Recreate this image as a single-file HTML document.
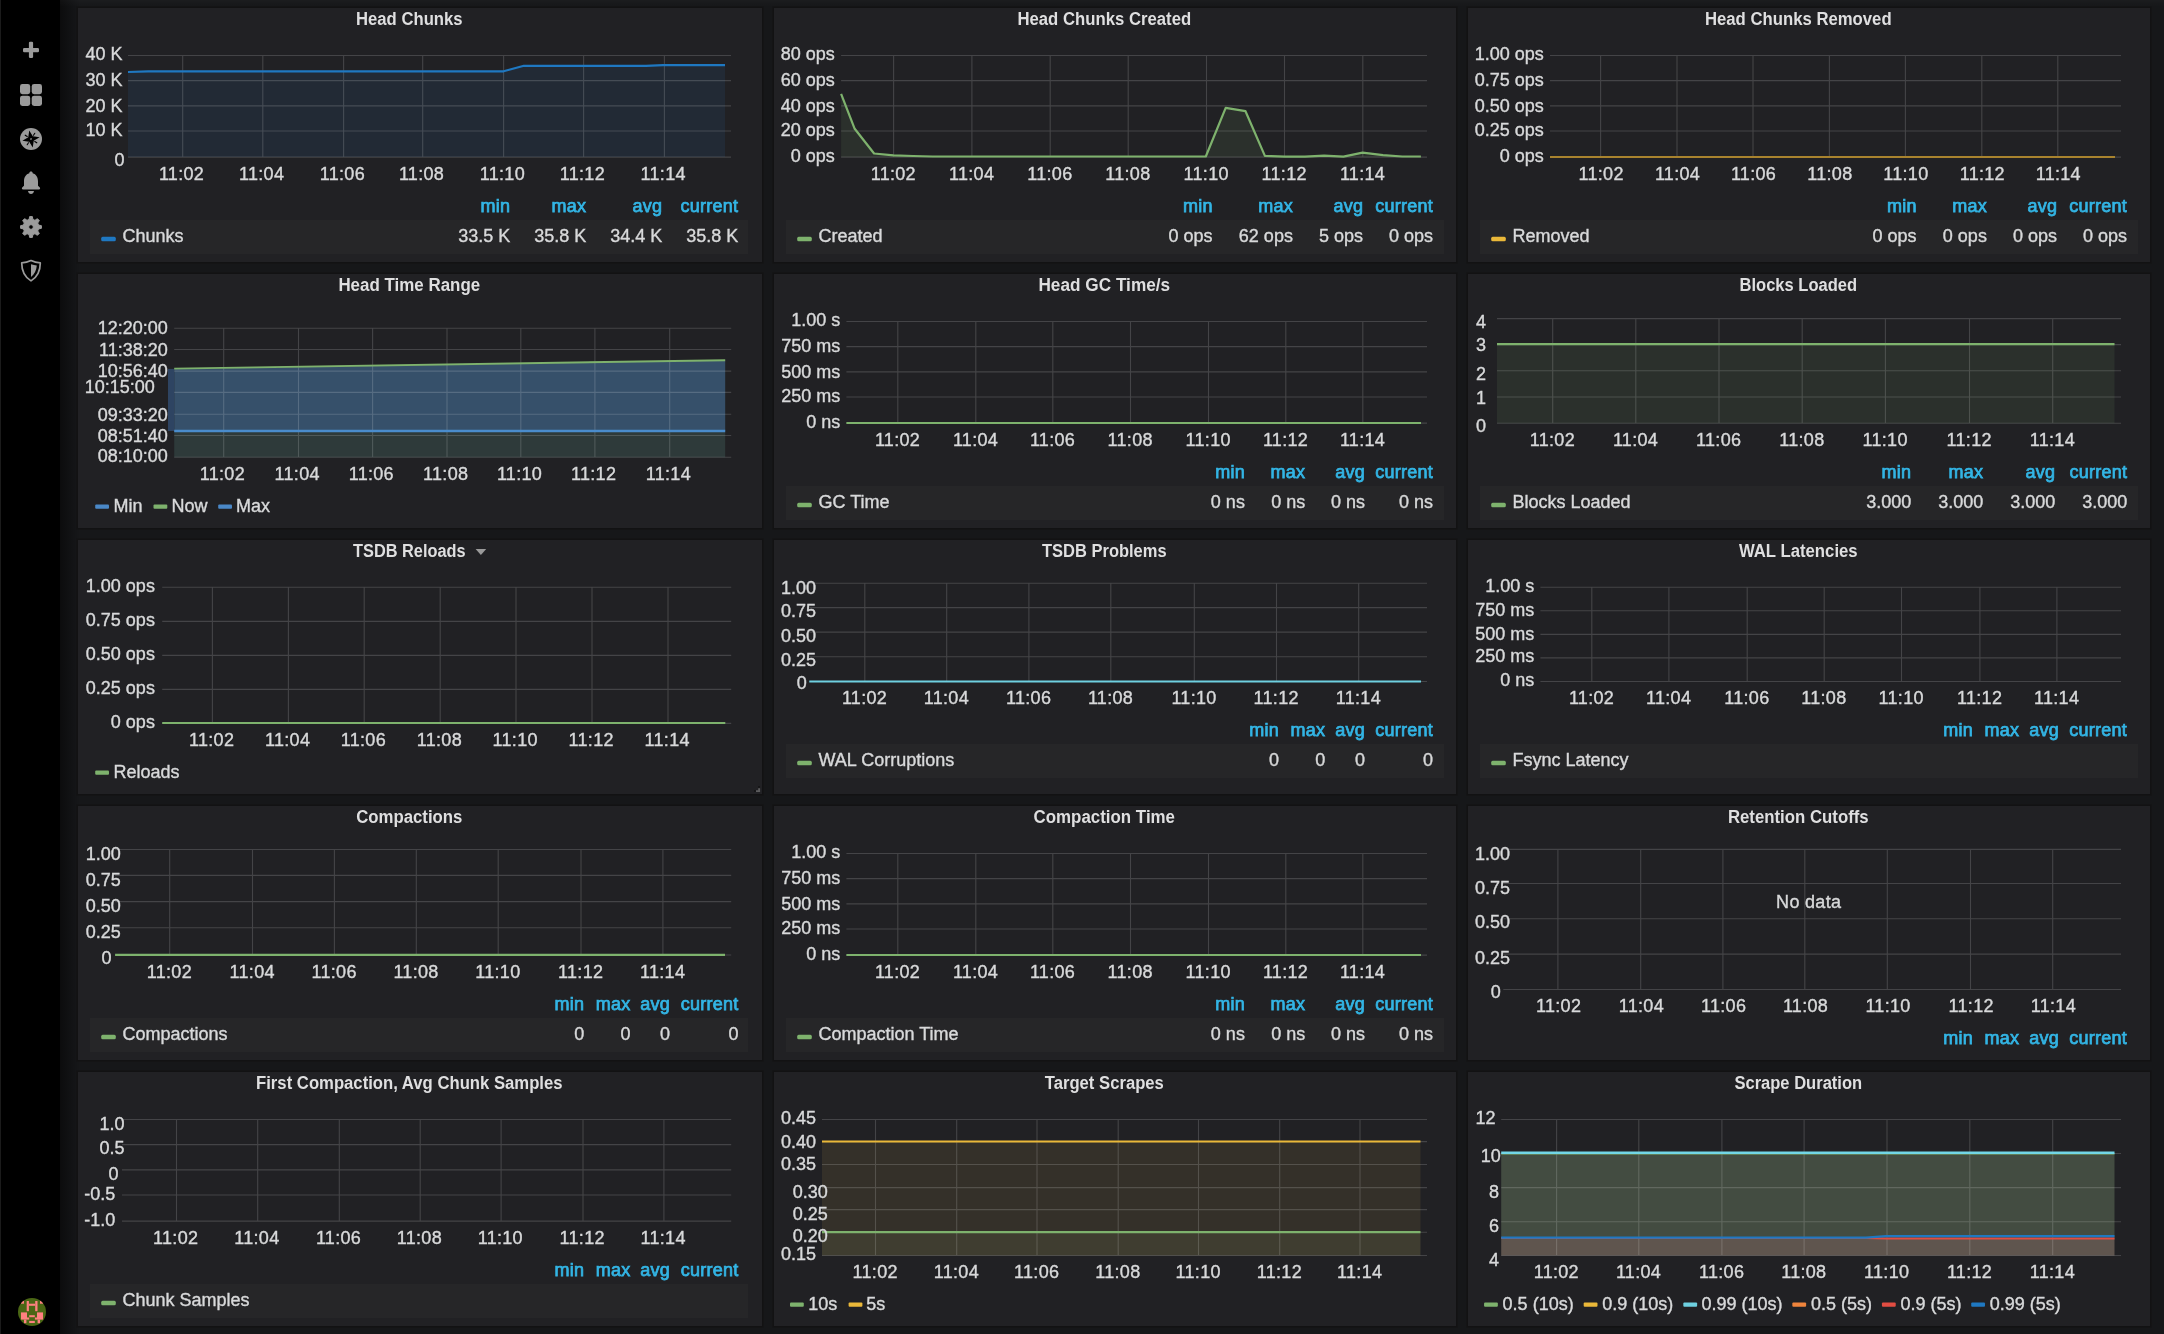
<!DOCTYPE html>
<html lang="en"><head><meta charset="utf-8"><title>Prometheus 2.0 Stats - Grafana</title>
<style>
html,body{margin:0;padding:0}
body{width:2164px;height:1334px;overflow:hidden;background:#161719;position:relative;
 font-family:"Liberation Sans",sans-serif;font-size:18px;color:#d8d9da}
.sidemenu{position:absolute;left:0;top:0;width:60px;height:1334px;background:#000;box-shadow:inset 1px 0 0 #1b1b1b}
.sidemenu svg{position:absolute;left:0;top:0}
.shade{position:absolute;left:60px;top:0;width:20px;height:1334px;background:linear-gradient(90deg,#0c0c0d 0,#131416 70%,#161719 100%)}
.topshade{position:absolute;left:60px;top:0;width:2104px;height:7px;background:linear-gradient(180deg,rgba(255,255,255,.024) 0,rgba(255,255,255,.01) 45%,rgba(255,255,255,0) 100%)}
.panel{position:absolute;background:#212124;box-shadow:0 0 0 1.5px #121213;margin:0}
.psvg{position:absolute;left:0;top:0;overflow:visible;will-change:transform}
.grid{stroke:#ffffff;stroke-opacity:.16;stroke-width:1.1;fill:none}
text{font-family:"Liberation Sans",sans-serif;font-size:18px;fill:#d8d9da;stroke:#d8d9da;stroke-width:.38px}
.yl{text-anchor:end}
.xl{text-anchor:middle;letter-spacing:.3px}
.title{text-anchor:middle;font-weight:bold;fill:#dfdfe0;stroke:none}
.lh{text-anchor:end;letter-spacing:.25px;fill:#33b5e5;stroke:#33b5e5;stroke-width:.75px}
.lv{text-anchor:end}
</style></head><body>
<nav class="sidemenu">
<svg width="60" height="1334" viewBox="0 0 60 1334">
<g fill="#9b9b9b"><rect x="23" y="48" width="16" height="4.2" rx="1.2"/><rect x="28.9" y="41.8" width="4.2" height="16.2" rx="1.2"/></g>
<g fill="#9b9b9b"><rect x="20" y="84" width="10.2" height="10.2" rx="2.4"/><rect x="31.7" y="84" width="10.3" height="10.2" rx="2.4"/><rect x="20" y="95.7" width="10.2" height="10.3" rx="2.4"/><rect x="31.7" y="95.7" width="10.3" height="10.3" rx="2.4"/></g>
<g transform="translate(31 139)"><circle r="11" fill="#9b9b9b"/><g transform="rotate(-11.6)"><path d="M0 -8.8L2.3 -2.3L8.8 0L2.3 2.3L0 8.8L-2.3 2.3L-8.8 0L-2.3 -2.3Z" fill="#000"/><path d="M3.2 -3.2L4.9 -4.9M3.2 3.2L4.9 4.9M-3.2 3.2L-4.9 4.9M-3.2 -3.2L-4.9 -4.9" stroke="#000" stroke-width="1.1" stroke-linecap="round"/><rect x="-0.8" y="-0.8" width="1.6" height="1.6" fill="#8a8a8a"/></g></g>
<g fill="#9b9b9b"><path d="M31 171.6c1 0 1.7 0.7 1.7 1.6c3.4 1 5.3 4 5.3 8.2v4.4l1.8 1.7c0.6 0.6 0.3 1.9 -0.8 1.9h-16c-1.1 0 -1.4 -1.3 -0.8 -1.9l1.8 -1.7v-4.4c0 -4.2 1.9 -7.2 5.3 -8.2c0 -0.9 0.7 -1.6 1.7 -1.6z"/><path d="M28 191h6c-0.3 1.8 -1.5 3 -3 3s-2.700 -1.2 -3 -3z"/></g>
<path d="M29.07 219.44L29.64 216.59L32.36 216.59L32.93 219.44L34.98 220.29L37.4 218.68L39.32 220.6L37.71 223.02L38.56 225.07L41.41 225.64L41.41 228.36L38.56 228.93L37.71 230.98L39.32 233.4L37.4 235.32L34.98 233.71L32.93 234.56L32.36 237.41L29.64 237.41L29.07 234.56L27.02 233.71L24.6 235.32L22.68 233.4L24.29 230.98L23.44 228.93L20.59 228.36L20.59 225.64L23.44 225.07L24.29 223.02L22.68 220.6L24.6 218.68L27.02 220.29ZM31 224.7a2.3 2.3 0 1 0 0.01 0z" fill="#9b9b9b" fill-rule="evenodd" stroke="#9b9b9b" stroke-width="1" stroke-linejoin="round"/>
<path d="M31 260.6c3 1.5 6 2.200 9.300 2.300c0 8.500 -3.300 14.200 -9.300 18c-6 -3.800 -9.300 -9.500 -9.300 -18c3.300 -0.100 6.300 -0.800 9.300 -2.300z" fill="none" stroke="#9b9b9b" stroke-width="1.700" stroke-linejoin="round"/>
<path d="M31 264.3c2 0.500 4 0.900 5.800 1.100c-0.400 5 -2.300 8.700 -5.800 11.500z" fill="#9b9b9b"/>
<g transform="translate(32 1312)"><clipPath id="av"><circle r="14"/></clipPath><circle r="14" fill="#4a6614"/><g clip-path="url(#av)" fill="#ff8080"><rect x="-5.300" y="-11" width="2.200" height="10.200"/><rect x="3.200" y="-11" width="2.300" height="10.200"/><rect x="-3.100" y="-8.300" width="6.300" height="2.100"/><rect x="-11" y="-11" width="3" height="2.700"/><rect x="8" y="-11" width="3" height="2.700"/><rect x="-11" y="0.400" width="6" height="7.200"/><rect x="5" y="0.400" width="6" height="7.200"/><rect x="-5" y="5.500" width="2.200" height="2.100"/><rect x="2.900" y="5.500" width="2.100" height="2.100"/><rect x="-8" y="7.600" width="2.400" height="3.600"/><rect x="5.600" y="7.600" width="2.400" height="3.600"/><rect x="-2.800" y="3.200" width="5.600" height="2"/><rect x="-2.800" y="8.900" width="5.600" height="2.100"/></g></g>
</svg></nav>
<div class="shade"></div>
<div class="topshade"></div>
<main class="dashboard">
<section class="panel" style="left:78px;top:8px;width:684px;height:254px">
<svg class="psvg" width="684" height="254" viewBox="0 0 684 254">
<g class="fills"><polygon class="fillarea" points="50,64 70,63.4 425.6,63.3 445.9,57.8 568,57.8 585,57.2 647,57.2 647,149.1 50,149.1" fill="#222a35"/></g>
<path class="grid" d="M50 47.5H653M50 72.6H653M50 97.9H653M50 123H653M50 149.1H653M104.7 47.5V149.1M184.8 47.5V149.1M265.6 47.5V149.1M344.7 47.5V149.1M425.6 47.5V149.1M505.6 47.5V149.1M586.4 47.5V149.1"/>
<g class="lines"><polyline points="50,64 70,63.4 425.6,63.3 445.9,57.8 568,57.8 585,57.2 647,57.2" fill="none" stroke="#1f78c1" stroke-width="2.2" stroke-linejoin="round"/></g>
<g class="axis"><text class="yl" x="44.6" y="52">40 K</text><text class="yl" x="44.6" y="77.8">30 K</text><text class="yl" x="44.6" y="103.8">20 K</text><text class="yl" x="44.6" y="128">10 K</text><text class="yl" x="46.4" y="157.8">0</text><text class="xl" x="103.5" y="171.7">11:02</text><text class="xl" x="183.6" y="171.7">11:04</text><text class="xl" x="264.4" y="171.7">11:06</text><text class="xl" x="343.5" y="171.7">11:08</text><text class="xl" x="424.4" y="171.7">11:10</text><text class="xl" x="504.4" y="171.7">11:12</text><text class="xl" x="585.2" y="171.7">11:14</text></g>
<text class="title" x="331.3" y="16.7" textLength="106.5" lengthAdjust="spacingAndGlyphs">Head Chunks</text>
<text class="lh" x="432.3" y="204.3">min</text>
<text class="lh" x="508.3" y="204.3">max</text>
<text class="lh" x="584.3" y="204.3">avg</text>
<text class="lh" x="660.3" y="204.3">current</text>
<rect x="12" y="212" width="658" height="34" fill="#262628"/>
<rect x="23.2" y="228.8" width="14.6" height="4.4" rx="1.5" fill="#1f78c1"/>
<text class="lt" x="44.5" y="234.2">Chunks</text>
<text class="lv" x="432.2" y="234.2">33.5 K</text>
<text class="lv" x="508.2" y="234.2">35.8 K</text>
<text class="lv" x="584.2" y="234.2">34.4 K</text>
<text class="lv" x="660.2" y="234.2">35.8 K</text>
</svg>
</section>
<section class="panel" style="left:774px;top:8px;width:682px;height:254px">
<svg class="psvg" width="682" height="254" viewBox="0 0 682 254">
<g class="fills"><polygon class="fillarea" points="67.1,85.9 80.7,120.8 100.1,145.5 119.5,147.3 139.2,148 158.6,148.5 431.8,148.5 451.7,99.9 471.5,103.2 490.9,147.9 510.5,148.6 531,148.6 550.2,147.7 569.4,148.6 588.6,144.7 609,147.2 628.3,148.5 646.9,148.5 646.9,149.1 67.1,149.1" fill="#2b302c"/></g>
<path class="grid" d="M67.1 47.5H653M67.1 72.6H653M67.1 97.9H653M67.1 123H653M67.1 149.1H653M119.6 47.5V149.1M197.9 47.5V149.1M276.2 47.5V149.1M354.2 47.5V149.1M432.5 47.5V149.1M510.5 47.5V149.1M588.8 47.5V149.1"/>
<g class="lines"><polyline points="67.1,85.9 80.7,120.8 100.1,145.5 119.5,147.3 139.2,148 158.6,148.5 431.8,148.5 451.7,99.9 471.5,103.2 490.9,147.9 510.5,148.6 531,148.6 550.2,147.7 569.4,148.6 588.6,144.7 609,147.2 628.3,148.5 646.9,148.5" fill="none" stroke="#7eb26d" stroke-width="2.2" stroke-linejoin="round"/></g>
<g class="axis"><text class="yl" x="60.8" y="51.8">80 ops</text><text class="yl" x="60.8" y="77.8">60 ops</text><text class="yl" x="60.8" y="103.6">40 ops</text><text class="yl" x="60.8" y="127.8">20 ops</text><text class="yl" x="60.8" y="153.8">0 ops</text><text class="xl" x="119.3" y="171.7">11:02</text><text class="xl" x="197.6" y="171.7">11:04</text><text class="xl" x="275.9" y="171.7">11:06</text><text class="xl" x="353.9" y="171.7">11:08</text><text class="xl" x="432.2" y="171.7">11:10</text><text class="xl" x="510.2" y="171.7">11:12</text><text class="xl" x="588.5" y="171.7">11:14</text></g>
<text class="title" x="330.3" y="16.7" textLength="173.8" lengthAdjust="spacingAndGlyphs">Head Chunks Created</text>
<text class="lh" x="438.7" y="204.3">min</text>
<text class="lh" x="519" y="204.3">max</text>
<text class="lh" x="589.2" y="204.3">avg</text>
<text class="lh" x="659.1" y="204.3">current</text>
<rect x="12" y="212" width="658" height="34" fill="#262628"/>
<rect x="23.2" y="228.8" width="14.6" height="4.4" rx="1.5" fill="#7eb26d"/>
<text class="lt" x="44.5" y="234.2">Created</text>
<text class="lv" x="438.6" y="234.2">0 ops</text>
<text class="lv" x="518.9" y="234.2">62 ops</text>
<text class="lv" x="589.1" y="234.2">5 ops</text>
<text class="lv" x="659" y="234.2">0 ops</text>
</svg>
</section>
<section class="panel" style="left:1468px;top:8px;width:682px;height:254px">
<svg class="psvg" width="682" height="254" viewBox="0 0 682 254">
<g class="fills"></g>
<path class="grid" d="M82 47.5H653M82 72.6H653M82 97.9H653M82 123H653M82 149.1H653M132.6 47.5V149.1M209 47.5V149.1M285 47.5V149.1M361.4 47.5V149.1M437.4 47.5V149.1M513.8 47.5V149.1M589.8 47.5V149.1"/>
<g class="lines"><polyline points="82,149 647,149" fill="none" stroke="#a8832e" stroke-width="2.2" stroke-linejoin="round"/></g>
<g class="axis"><text class="yl" x="75.7" y="51.8">1.00 ops</text><text class="yl" x="75.7" y="77.8">0.75 ops</text><text class="yl" x="75.7" y="103.6">0.50 ops</text><text class="yl" x="75.7" y="127.8">0.25 ops</text><text class="yl" x="75.7" y="153.8">0 ops</text><text class="xl" x="133.1" y="171.7">11:02</text><text class="xl" x="209.5" y="171.7">11:04</text><text class="xl" x="285.5" y="171.7">11:06</text><text class="xl" x="361.9" y="171.7">11:08</text><text class="xl" x="437.9" y="171.7">11:10</text><text class="xl" x="514.3" y="171.7">11:12</text><text class="xl" x="590.3" y="171.7">11:14</text></g>
<text class="title" x="330.3" y="16.7" textLength="186.7" lengthAdjust="spacingAndGlyphs">Head Chunks Removed</text>
<text class="lh" x="448.7" y="204.3">min</text>
<text class="lh" x="519" y="204.3">max</text>
<text class="lh" x="589.2" y="204.3">avg</text>
<text class="lh" x="659.1" y="204.3">current</text>
<rect x="12" y="212" width="658" height="34" fill="#262628"/>
<rect x="23.2" y="228.8" width="14.6" height="4.4" rx="1.5" fill="#eab839"/>
<text class="lt" x="44.5" y="234.2">Removed</text>
<text class="lv" x="448.6" y="234.2">0 ops</text>
<text class="lv" x="518.9" y="234.2">0 ops</text>
<text class="lv" x="589.1" y="234.2">0 ops</text>
<text class="lv" x="659" y="234.2">0 ops</text>
</svg>
</section>
<section class="panel" style="left:78px;top:274px;width:684px;height:254px">
<svg class="psvg" width="684" height="254" viewBox="0 0 684 254">
<g class="fills"><polygon points="96.2,157 647.2,157 647.2,183.2 96.2,183.2" fill="#2e3a3a"/><polygon points="96.2,94.9 647.2,86.5 647.2,157 96.2,157" fill="#36506a"/><rect x="90" y="94.9" width="6.2" height="62.1" fill="#2e4462"/></g>
<path class="grid" d="M96.2 54.2H653.2M96.2 75.5H653.2M96.2 97.1H653.2M96.2 118.4H653.2M96.2 140.3H653.2M96.2 161.5H653.2M96.2 183.2H653.2M145.7 54.2V183.2M220.5 54.2V183.2M294.6 54.2V183.2M369 54.2V183.2M442.8 54.2V183.2M516.9 54.2V183.2M591.7 54.2V183.2"/>
<g class="lines"><line x1="96.2" y1="157" x2="647.2" y2="157" stroke="#4a8ccc" stroke-width="2.3"/><line x1="96.2" y1="94.6" x2="647.2" y2="86.2" stroke="#7eb26d" stroke-width="1.9"/></g>
<g class="axis"><text class="yl" x="89.8" y="60.3">12:20:00</text><text class="yl" x="89.8" y="82.3">11:38:20</text><text class="yl" x="89.8" y="103">10:56:40</text><text class="yl" x="76.9" y="119">10:15:00</text><text class="yl" x="89.8" y="146.8">09:33:20</text><text class="yl" x="89.8" y="168.4">08:51:40</text><text class="yl" x="89.8" y="188.4">08:10:00</text><text class="xl" x="144.4" y="205.6">11:02</text><text class="xl" x="219.2" y="205.6">11:04</text><text class="xl" x="293.3" y="205.6">11:06</text><text class="xl" x="367.7" y="205.6">11:08</text><text class="xl" x="441.5" y="205.6">11:10</text><text class="xl" x="515.6" y="205.6">11:12</text><text class="xl" x="590.4" y="205.6">11:14</text></g>
<text class="title" x="331.3" y="16.7" textLength="141.8" lengthAdjust="spacingAndGlyphs">Head Time Range</text>
<rect x="17.2" y="230.5" width="13.8" height="4.2" rx="1" fill="#4a88c7"/>
<text class="lt" x="35.5" y="237.8">Min</text>
<rect x="75.5" y="230.5" width="13.8" height="4.2" rx="1" fill="#7eb26d"/>
<text class="lt" x="93.4" y="237.8">Now</text>
<rect x="140.2" y="230.5" width="13.8" height="4.2" rx="1" fill="#4a88c7"/>
<text class="lt" x="158.1" y="237.8">Max</text>
</svg>
</section>
<section class="panel" style="left:774px;top:274px;width:682px;height:254px">
<svg class="psvg" width="682" height="254" viewBox="0 0 682 254">
<g class="fills"></g>
<path class="grid" d="M72.4 47.5H653M72.4 72.6H653M72.4 97.9H653M72.4 123H653M72.4 149.1H653M123.8 47.5V149.1M201.8 47.5V149.1M278.8 47.5V149.1M356.5 47.5V149.1M434.5 47.5V149.1M511.8 47.5V149.1M588.8 47.5V149.1"/>
<g class="lines"><polyline points="72.4,149 647,149" fill="none" stroke="#7eb26d" stroke-width="2.2" stroke-linejoin="round"/></g>
<g class="axis"><text class="yl" x="66.3" y="51.8">1.00 s</text><text class="yl" x="66.3" y="77.8">750 ms</text><text class="yl" x="66.3" y="103.6">500 ms</text><text class="yl" x="66.3" y="127.8">250 ms</text><text class="yl" x="66.3" y="153.8">0 ns</text><text class="xl" x="123.5" y="171.7">11:02</text><text class="xl" x="201.5" y="171.7">11:04</text><text class="xl" x="278.5" y="171.7">11:06</text><text class="xl" x="356.2" y="171.7">11:08</text><text class="xl" x="434.2" y="171.7">11:10</text><text class="xl" x="511.5" y="171.7">11:12</text><text class="xl" x="588.5" y="171.7">11:14</text></g>
<text class="title" x="330.3" y="16.7" textLength="131.7" lengthAdjust="spacingAndGlyphs">Head GC Time/s</text>
<text class="lh" x="471" y="204.3">min</text>
<text class="lh" x="531.3" y="204.3">max</text>
<text class="lh" x="591.1" y="204.3">avg</text>
<text class="lh" x="659.1" y="204.3">current</text>
<rect x="12" y="212" width="658" height="34" fill="#262628"/>
<rect x="23.2" y="228.8" width="14.6" height="4.4" rx="1.5" fill="#7eb26d"/>
<text class="lt" x="44.5" y="234.2">GC Time</text>
<text class="lv" x="470.9" y="234.2">0 ns</text>
<text class="lv" x="531.2" y="234.2">0 ns</text>
<text class="lv" x="591" y="234.2">0 ns</text>
<text class="lv" x="659" y="234.2">0 ns</text>
</svg>
</section>
<section class="panel" style="left:1468px;top:274px;width:682px;height:254px">
<svg class="psvg" width="682" height="254" viewBox="0 0 682 254">
<g class="fills"><polygon class="fillarea" points="29,70.1 646.5,70.1 646.5,149.3 29,149.3" fill="#2b302c"/></g>
<path class="grid" d="M29 44.6H653M29 70.6H653M29 96.7H653M29 123H653M29 149.3H653M84.7 44.6V149.3M167.8 44.6V149.3M251 44.6V149.3M334.2 44.6V149.3M417.4 44.6V149.3M501.5 44.6V149.3M584.7 44.6V149.3"/>
<g class="lines"><polyline points="29,70.1 646.5,70.1" fill="none" stroke="#7eb26d" stroke-width="2.2" stroke-linejoin="round"/></g>
<g class="axis"><text class="yl" x="18.1" y="53.5">4</text><text class="yl" x="18.1" y="77.1">3</text><text class="yl" x="18.1" y="105.6">2</text><text class="yl" x="18.1" y="129.8">1</text><text class="yl" x="18.1" y="157.7">0</text><text class="xl" x="84.4" y="171.9">11:02</text><text class="xl" x="167.5" y="171.9">11:04</text><text class="xl" x="250.7" y="171.9">11:06</text><text class="xl" x="333.9" y="171.9">11:08</text><text class="xl" x="417.1" y="171.9">11:10</text><text class="xl" x="501.2" y="171.9">11:12</text><text class="xl" x="584.4" y="171.9">11:14</text></g>
<text class="title" x="330.3" y="16.7" textLength="117.5" lengthAdjust="spacingAndGlyphs">Blocks Loaded</text>
<text class="lh" x="443.3" y="204.3">min</text>
<text class="lh" x="515.3" y="204.3">max</text>
<text class="lh" x="587.3" y="204.3">avg</text>
<text class="lh" x="659.3" y="204.3">current</text>
<rect x="12" y="212" width="658" height="34" fill="#262628"/>
<rect x="23.2" y="228.8" width="14.6" height="4.4" rx="1.5" fill="#7eb26d"/>
<text class="lt" x="44.5" y="234.2">Blocks Loaded</text>
<text class="lv" x="443.2" y="234.2">3.000</text>
<text class="lv" x="515.2" y="234.2">3.000</text>
<text class="lv" x="587.2" y="234.2">3.000</text>
<text class="lv" x="659.2" y="234.2">3.000</text>
</svg>
</section>
<section class="panel" style="left:78px;top:540px;width:684px;height:254px">
<svg class="psvg" width="684" height="254" viewBox="0 0 684 254">
<g class="fills"></g>
<path class="grid" d="M84.2 47.3H653.2M84.2 81.4H653.2M84.2 115.4H653.2M84.2 149.4H653.2M84.2 183.4H653.2M134.4 47.3V183.4M210.4 47.3V183.4M286.2 47.3V183.4M362.2 47.3V183.4M438 47.3V183.4M514 47.3V183.4M590 47.3V183.4"/>
<g class="lines"><polyline points="84.2,183 647.3,183" fill="none" stroke="#7eb26d" stroke-width="2.2" stroke-linejoin="round"/></g>
<g class="axis"><text class="yl" x="76.9" y="51.8">1.00 ops</text><text class="yl" x="76.9" y="85.8">0.75 ops</text><text class="yl" x="76.9" y="119.8">0.50 ops</text><text class="yl" x="76.9" y="153.8">0.25 ops</text><text class="yl" x="76.9" y="187.8">0 ops</text><text class="xl" x="133.6" y="206.3">11:02</text><text class="xl" x="209.6" y="206.3">11:04</text><text class="xl" x="285.4" y="206.3">11:06</text><text class="xl" x="361.4" y="206.3">11:08</text><text class="xl" x="437.2" y="206.3">11:10</text><text class="xl" x="513.2" y="206.3">11:12</text><text class="xl" x="589.2" y="206.3">11:14</text></g>
<text class="title" x="331.3" y="16.7" textLength="112.5" lengthAdjust="spacingAndGlyphs">TSDB Reloads</text>
<path d="M397.6 8.9h10.6l-5.3 6.2z" fill="#9a9a9a"/>
<path d="M680.2 248.3h1.9v3.7h-4.1v-1.7h2.2z" fill="#5c5c5d"/><path d="M680 246h2v1.8h-2zM676 250h1.8v2h-1.8z" fill="#161617"/>
<rect x="17.2" y="230.5" width="13.8" height="4.2" rx="1" fill="#7eb26d"/>
<text class="lt" x="35.5" y="237.8">Reloads</text>
</svg>
</section>
<section class="panel" style="left:774px;top:540px;width:682px;height:254px">
<svg class="psvg" width="682" height="254" viewBox="0 0 682 254">
<g class="fills"></g>
<path class="grid" d="M35.3 43.3H653M35.3 67.6H653M35.3 92.1H653M35.3 116.8H653M35.3 141.5H653M90.8 43.3V141.5M172.7 43.3V141.5M254.9 43.3V141.5M336.8 43.3V141.5M420.3 43.3V141.5M502.5 43.3V141.5M584.7 43.3V141.5"/>
<g class="lines"><polyline points="35.3,141.5 647,141.5" fill="none" stroke="#6ed0e0" stroke-width="2.2" stroke-linejoin="round"/></g>
<g class="axis"><text class="yl" x="42.1" y="53.5">1.00</text><text class="yl" x="42.1" y="77.4">0.75</text><text class="yl" x="42.1" y="101.7">0.50</text><text class="yl" x="42.1" y="125.6">0.25</text><text class="yl" x="32.7" y="149.3">0</text><text class="xl" x="90.5" y="163.8">11:02</text><text class="xl" x="172.4" y="163.8">11:04</text><text class="xl" x="254.6" y="163.8">11:06</text><text class="xl" x="336.5" y="163.8">11:08</text><text class="xl" x="420" y="163.8">11:10</text><text class="xl" x="502.2" y="163.8">11:12</text><text class="xl" x="584.4" y="163.8">11:14</text></g>
<text class="title" x="330.3" y="16.7" textLength="124.6" lengthAdjust="spacingAndGlyphs">TSDB Problems</text>
<text class="lh" x="505" y="196.3">min</text>
<text class="lh" x="551.3" y="196.3">max</text>
<text class="lh" x="591.1" y="196.3">avg</text>
<text class="lh" x="659.1" y="196.3">current</text>
<rect x="12" y="204" width="658" height="34" fill="#262628"/>
<rect x="23.2" y="220.8" width="14.6" height="4.4" rx="1.5" fill="#7eb26d"/>
<text class="lt" x="44.5" y="226.2">WAL Corruptions</text>
<text class="lv" x="504.9" y="226.2">0</text>
<text class="lv" x="551.2" y="226.2">0</text>
<text class="lv" x="591" y="226.2">0</text>
<text class="lv" x="659" y="226.2">0</text>
</svg>
</section>
<section class="panel" style="left:1468px;top:540px;width:682px;height:254px">
<svg class="psvg" width="682" height="254" viewBox="0 0 682 254">
<g class="fills"></g>
<path class="grid" d="M72.4 47.3H653M72.4 70.8H653M72.4 94.4H653M72.4 117.9H653M72.4 141.5H653M123.8 47.3V141.5M200.9 47.3V141.5M279.2 47.3V141.5M356.2 47.3V141.5M433.5 47.3V141.5M511.9 47.3V141.5M588.9 47.3V141.5"/>
<g class="lines"></g>
<g class="axis"><text class="yl" x="66.3" y="51.8">1.00 s</text><text class="yl" x="66.3" y="75.8">750 ms</text><text class="yl" x="66.3" y="99.8">500 ms</text><text class="yl" x="66.3" y="121.8">250 ms</text><text class="yl" x="66.3" y="146">0 ns</text><text class="xl" x="123.5" y="163.8">11:02</text><text class="xl" x="200.6" y="163.8">11:04</text><text class="xl" x="278.9" y="163.8">11:06</text><text class="xl" x="355.9" y="163.8">11:08</text><text class="xl" x="433.2" y="163.8">11:10</text><text class="xl" x="511.6" y="163.8">11:12</text><text class="xl" x="588.6" y="163.8">11:14</text></g>
<text class="title" x="330.3" y="16.7" textLength="118.8" lengthAdjust="spacingAndGlyphs">WAL Latencies</text>
<text class="lh" x="505" y="196.3">min</text>
<text class="lh" x="551.3" y="196.3">max</text>
<text class="lh" x="591.1" y="196.3">avg</text>
<text class="lh" x="659.1" y="196.3">current</text>
<rect x="12" y="204" width="658" height="34" fill="#262628"/>
<rect x="23.2" y="220.8" width="14.6" height="4.4" rx="1.5" fill="#7eb26d"/>
<text class="lt" x="44.5" y="226.2">Fsync Latency</text>
</svg>
</section>
<section class="panel" style="left:78px;top:806px;width:684px;height:254px">
<svg class="psvg" width="684" height="254" viewBox="0 0 684 254">
<g class="fills"></g>
<path class="grid" d="M37.1 43.5H653.2M37.1 69.4H653.2M37.1 95.6H653.2M37.1 121.8H653.2M37.1 149H653.2M91.7 43.5V149M174.5 43.5V149M256.4 43.5V149M338.3 43.5V149M420.2 43.5V149M503 43.5V149M584.9 43.5V149"/>
<g class="lines"><polyline points="37.1,148.8 647,148.8" fill="none" stroke="#7eb26d" stroke-width="2.2" stroke-linejoin="round"/></g>
<g class="axis"><text class="yl" x="42.9" y="53.5">1.00</text><text class="yl" x="42.9" y="80.2">0.75</text><text class="yl" x="42.9" y="105.6">0.50</text><text class="yl" x="42.9" y="131.5">0.25</text><text class="yl" x="33.5" y="157.7">0</text><text class="xl" x="91.4" y="171.6">11:02</text><text class="xl" x="174.2" y="171.6">11:04</text><text class="xl" x="256.1" y="171.6">11:06</text><text class="xl" x="338" y="171.6">11:08</text><text class="xl" x="419.9" y="171.6">11:10</text><text class="xl" x="502.7" y="171.6">11:12</text><text class="xl" x="584.6" y="171.6">11:14</text></g>
<text class="title" x="331.3" y="16.7" textLength="106.2" lengthAdjust="spacingAndGlyphs">Compactions</text>
<text class="lh" x="506.3" y="204.3">min</text>
<text class="lh" x="552.5" y="204.3">max</text>
<text class="lh" x="592" y="204.3">avg</text>
<text class="lh" x="660.6" y="204.3">current</text>
<rect x="12" y="212" width="658" height="34" fill="#262628"/>
<rect x="23.2" y="228.8" width="14.6" height="4.4" rx="1.5" fill="#7eb26d"/>
<text class="lt" x="44.5" y="234.2">Compactions</text>
<text class="lv" x="506.2" y="234.2">0</text>
<text class="lv" x="552.4" y="234.2">0</text>
<text class="lv" x="591.9" y="234.2">0</text>
<text class="lv" x="660.5" y="234.2">0</text>
</svg>
</section>
<section class="panel" style="left:774px;top:806px;width:682px;height:254px">
<svg class="psvg" width="682" height="254" viewBox="0 0 682 254">
<g class="fills"></g>
<path class="grid" d="M72.4 47.5H653M72.4 72.6H653M72.4 97.9H653M72.4 123H653M72.4 149.1H653M123.8 47.5V149.1M201.8 47.5V149.1M278.8 47.5V149.1M356.5 47.5V149.1M434.5 47.5V149.1M511.8 47.5V149.1M588.8 47.5V149.1"/>
<g class="lines"><polyline points="72.4,149 647,149" fill="none" stroke="#7eb26d" stroke-width="2.2" stroke-linejoin="round"/></g>
<g class="axis"><text class="yl" x="66.3" y="51.8">1.00 s</text><text class="yl" x="66.3" y="77.8">750 ms</text><text class="yl" x="66.3" y="103.6">500 ms</text><text class="yl" x="66.3" y="127.8">250 ms</text><text class="yl" x="66.3" y="153.8">0 ns</text><text class="xl" x="123.5" y="171.7">11:02</text><text class="xl" x="201.5" y="171.7">11:04</text><text class="xl" x="278.5" y="171.7">11:06</text><text class="xl" x="356.2" y="171.7">11:08</text><text class="xl" x="434.2" y="171.7">11:10</text><text class="xl" x="511.5" y="171.7">11:12</text><text class="xl" x="588.5" y="171.7">11:14</text></g>
<text class="title" x="330.3" y="16.7" textLength="141.4" lengthAdjust="spacingAndGlyphs">Compaction Time</text>
<text class="lh" x="471" y="204.3">min</text>
<text class="lh" x="531.3" y="204.3">max</text>
<text class="lh" x="591.1" y="204.3">avg</text>
<text class="lh" x="659.1" y="204.3">current</text>
<rect x="12" y="212" width="658" height="34" fill="#262628"/>
<rect x="23.2" y="228.8" width="14.6" height="4.4" rx="1.5" fill="#7eb26d"/>
<text class="lt" x="44.5" y="234.2">Compaction Time</text>
<text class="lv" x="470.9" y="234.2">0 ns</text>
<text class="lv" x="531.2" y="234.2">0 ns</text>
<text class="lv" x="591" y="234.2">0 ns</text>
<text class="lv" x="659" y="234.2">0 ns</text>
</svg>
</section>
<section class="panel" style="left:1468px;top:806px;width:682px;height:254px">
<svg class="psvg" width="682" height="254" viewBox="0 0 682 254">
<g class="fills"></g>
<path class="grid" d="M35.3 43.4H653M35.3 77.5H653M35.3 112.8H653M35.3 148.1H653M35.3 183.5H653M89.9 43.4V183.5M172.7 43.4V183.5M254.9 43.4V183.5M336.8 43.4V183.5M419.3 43.4V183.5M502.5 43.4V183.5M584.7 43.4V183.5"/>
<g class="lines"></g>
<g class="axis"><text class="yl" x="42.1" y="53.5">1.00</text><text class="yl" x="42.1" y="87.8">0.75</text><text class="yl" x="42.1" y="121.8">0.50</text><text class="yl" x="42.1" y="157.7">0.25</text><text class="yl" x="32.7" y="192">0</text><text class="xl" x="90.6" y="205.6">11:02</text><text class="xl" x="173.4" y="205.6">11:04</text><text class="xl" x="255.6" y="205.6">11:06</text><text class="xl" x="337.5" y="205.6">11:08</text><text class="xl" x="420" y="205.6">11:10</text><text class="xl" x="503.2" y="205.6">11:12</text><text class="xl" x="585.4" y="205.6">11:14</text></g>
<text class="xl" x="340.7" y="102">No data</text>
<text class="title" x="330.3" y="16.7" textLength="140.8" lengthAdjust="spacingAndGlyphs">Retention Cutoffs</text>
<text class="lh" x="505" y="238.3">min</text>
<text class="lh" x="551.3" y="238.3">max</text>
<text class="lh" x="591.1" y="238.3">avg</text>
<text class="lh" x="659.1" y="238.3">current</text>
</svg>
</section>
<section class="panel" style="left:78px;top:1072px;width:684px;height:254px">
<svg class="psvg" width="684" height="254" viewBox="0 0 684 254">
<g class="fills"></g>
<path class="grid" d="M44 47.5H653.2M44 72.6H653.2M44 97.9H653.2M44 123H653.2M44 149.1H653.2M98.5 47.5V149.1M179.7 47.5V149.1M261.3 47.5V149.1M342.2 47.5V149.1M423.1 47.5V149.1M505 47.5V149.1M585.9 47.5V149.1"/>
<g class="lines"></g>
<g class="axis"><text class="yl" x="46.5" y="58">1.0</text><text class="yl" x="46.5" y="81.9">0.5</text><text class="yl" x="40.6" y="107.8">0</text><text class="yl" x="37.4" y="127.9">-0.5</text><text class="yl" x="37.4" y="154.1">-1.0</text><text class="xl" x="97.7" y="171.7">11:02</text><text class="xl" x="178.9" y="171.7">11:04</text><text class="xl" x="260.5" y="171.7">11:06</text><text class="xl" x="341.4" y="171.7">11:08</text><text class="xl" x="422.3" y="171.7">11:10</text><text class="xl" x="504.2" y="171.7">11:12</text><text class="xl" x="585.1" y="171.7">11:14</text></g>
<text class="title" x="331.3" y="16.7" textLength="306.5" lengthAdjust="spacingAndGlyphs">First Compaction, Avg Chunk Samples</text>
<text class="lh" x="506.3" y="204.3">min</text>
<text class="lh" x="552.5" y="204.3">max</text>
<text class="lh" x="592" y="204.3">avg</text>
<text class="lh" x="660.6" y="204.3">current</text>
<rect x="12" y="212" width="658" height="34" fill="#262628"/>
<rect x="23.2" y="228.8" width="14.6" height="4.4" rx="1.5" fill="#7eb26d"/>
<text class="lt" x="44.5" y="234.2">Chunk Samples</text>
</svg>
</section>
<section class="panel" style="left:774px;top:1072px;width:682px;height:254px">
<svg class="psvg" width="682" height="254" viewBox="0 0 682 254">
<g class="fills"><rect x="48" y="69.5" width="598.5" height="90.7" fill="#343029"/><rect x="48" y="160.2" width="598.5" height="23.3" fill="#3f3d30"/></g>
<path class="grid" d="M48 47.5H653M48 69.6H653M48 92.5H653M48 115.6H653M48 137.6H653M48 160.3H653M48 183.5H653M101.5 47.5V183.5M182.7 47.5V183.5M263 47.5V183.5M344.2 47.5V183.5M424.5 47.5V183.5M505.7 47.5V183.5M586 47.5V183.5"/>
<g class="lines"><line x1="48" y1="160.2" x2="646.5" y2="160.2" stroke="#7eb26d" stroke-width="2.2"/><line x1="48" y1="69.5" x2="646.5" y2="69.5" stroke="#eab839" stroke-width="2.2"/></g>
<g class="axis"><text class="yl" x="42.1" y="51.5">0.45</text><text class="yl" x="42.1" y="75.8">0.40</text><text class="yl" x="42.1" y="98.1">0.35</text><text class="yl" x="53.7" y="126.2">0.30</text><text class="yl" x="53.7" y="148">0.25</text><text class="yl" x="53.7" y="170.2">0.20</text><text class="yl" x="42.1" y="187.8">0.15</text><text class="xl" x="101.2" y="205.6">11:02</text><text class="xl" x="182.4" y="205.6">11:04</text><text class="xl" x="262.7" y="205.6">11:06</text><text class="xl" x="343.9" y="205.6">11:08</text><text class="xl" x="424.2" y="205.6">11:10</text><text class="xl" x="505.4" y="205.6">11:12</text><text class="xl" x="585.7" y="205.6">11:14</text></g>
<text class="title" x="330.3" y="16.7" textLength="119.1" lengthAdjust="spacingAndGlyphs">Target Scrapes</text>
<rect x="16" y="230.5" width="13.8" height="4.2" rx="1" fill="#7eb26d"/>
<text class="lt" x="34.3" y="237.8">10s</text>
<rect x="74.6" y="230.5" width="13.8" height="4.2" rx="1" fill="#eab839"/>
<text class="lt" x="92.2" y="237.8">5s</text>
</svg>
</section>
<section class="panel" style="left:1468px;top:1072px;width:682px;height:254px">
<svg class="psvg" width="682" height="254" viewBox="0 0 682 254">
<g class="fills"><rect x="33.2" y="80.8" width="613.3" height="85" fill="#434c41"/><rect x="33.2" y="165.8" width="613.3" height="17.7" fill="#5f554e"/></g>
<path class="grid" d="M33.2 47.5H653M33.2 81.5H653M33.2 115.6H653M33.2 149.7H653M33.2 183.5H653M88.6 47.5V183.5M170.8 47.5V183.5M253.9 47.5V183.5M336.1 47.5V183.5M419 47.5V183.5M501.8 47.5V183.5M584.7 47.5V183.5"/>
<g class="lines"><polyline points="33.2,166 398,166 418,166.5 646.5,166.5" fill="none" stroke="#e24d42" stroke-width="2"/><polyline points="33.2,165.6 398,165.6 418,164.2 646.5,164.2" fill="none" stroke="#1f78c1" stroke-width="2.2"/><line x1="33.2" y1="82" x2="646.5" y2="82" stroke="#7eb26d" stroke-width="1.2"/><line x1="33.2" y1="80.8" x2="646.5" y2="80.8" stroke="#72d6e6" stroke-width="2.5"/></g>
<g class="axis"><text class="yl" x="27.5" y="51.5">12</text><text class="yl" x="32.7" y="90">10</text><text class="yl" x="31.1" y="125.6">8</text><text class="yl" x="31.1" y="159.6">6</text><text class="yl" x="31.1" y="193.6">4</text><text class="xl" x="88.3" y="205.6">11:02</text><text class="xl" x="170.5" y="205.6">11:04</text><text class="xl" x="253.6" y="205.6">11:06</text><text class="xl" x="335.8" y="205.6">11:08</text><text class="xl" x="418.7" y="205.6">11:10</text><text class="xl" x="501.5" y="205.6">11:12</text><text class="xl" x="584.4" y="205.6">11:14</text></g>
<text class="title" x="330.3" y="16.7" textLength="127.8" lengthAdjust="spacingAndGlyphs">Scrape Duration</text>
<rect x="16.06" y="230.5" width="13.8" height="4.2" rx="1" fill="#7eb26d"/>
<text class="lt" x="34.62" y="237.8">0.5 (10s)</text>
<rect x="115.69" y="230.5" width="13.8" height="4.2" rx="1" fill="#eab839"/>
<text class="lt" x="134.25" y="237.8">0.9 (10s)</text>
<rect x="215.32" y="230.5" width="13.8" height="4.2" rx="1" fill="#6ed0e0"/>
<text class="lt" x="233.56" y="237.8">0.99 (10s)</text>
<rect x="324.33" y="230.5" width="13.8" height="4.2" rx="1" fill="#ef843c"/>
<text class="lt" x="342.89" y="237.8">0.5 (5s)</text>
<rect x="413.93" y="230.5" width="13.8" height="4.2" rx="1" fill="#e24d42"/>
<text class="lt" x="432.5" y="237.8">0.9 (5s)</text>
<rect x="503.21" y="230.5" width="13.8" height="4.2" rx="1" fill="#1f78c1"/>
<text class="lt" x="521.78" y="237.8">0.99 (5s)</text>
</svg>
</section>
</main>
</body></html>
